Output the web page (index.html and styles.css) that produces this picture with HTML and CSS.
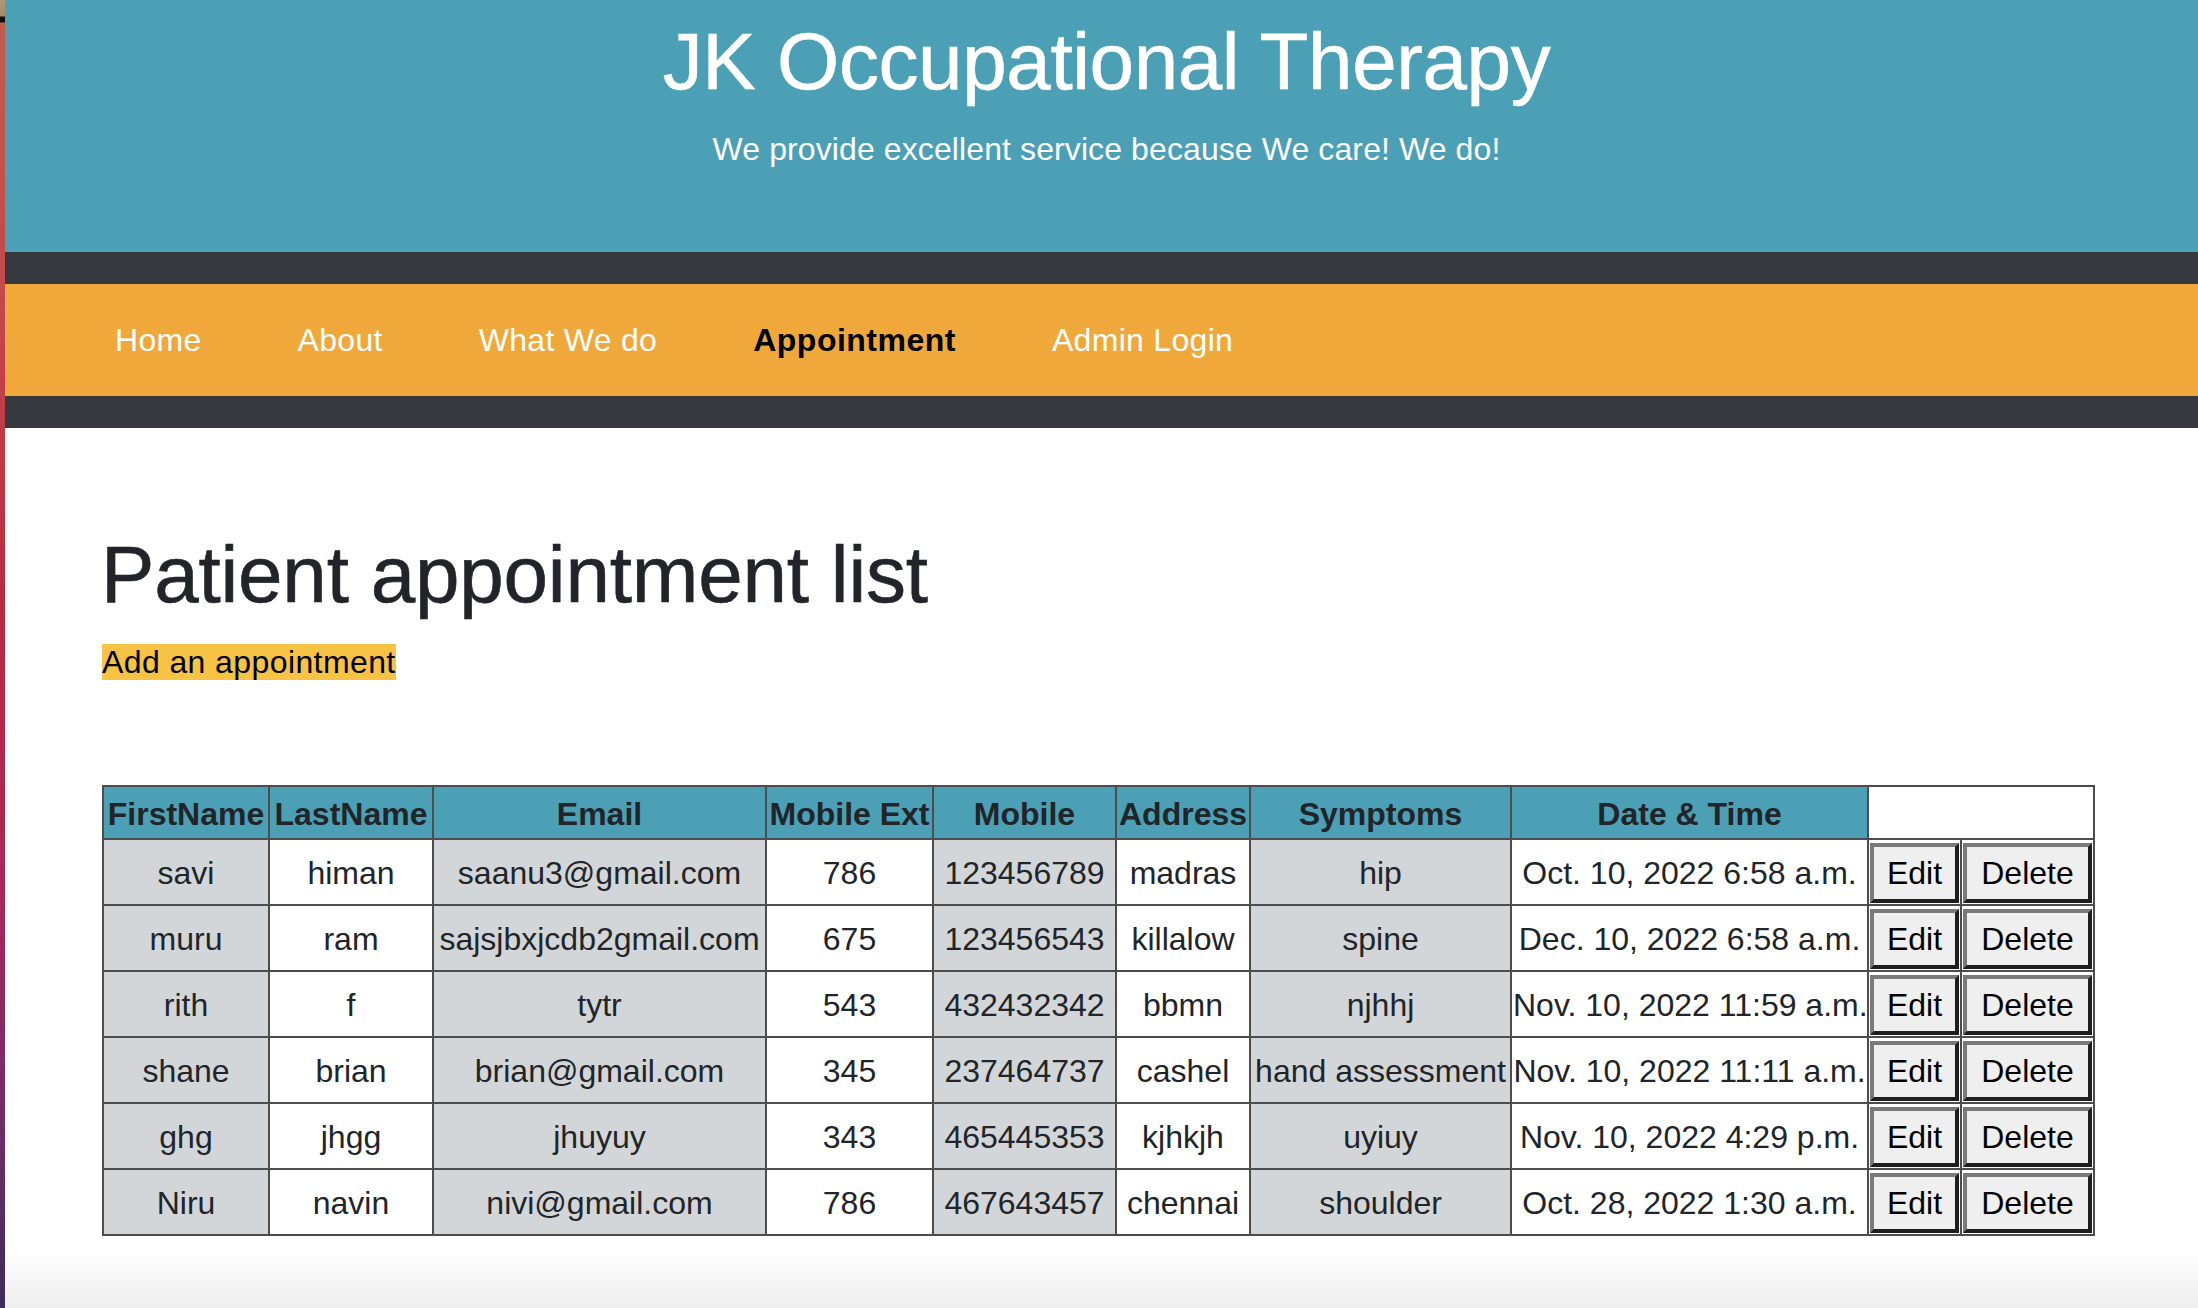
FILE: index.html
```html
<!DOCTYPE html>
<html lang="en">
<head>
<meta charset="utf-8">
<title>JK Occupational Therapy</title>
<link rel="stylesheet" href="styles.css">
</head>
<body>
<div class="strip"></div>
<div class="page">
  <header class="masthead">
    <h1 class="site-title">JK Occupational Therapy</h1>
    <p class="tagline">We provide excellent service because We care! We do!</p>
  </header>
  <div class="darkbar"></div>
  <nav class="nav">
    <a class="nav-link" href="#">Home</a>
    <a class="nav-link" href="#">About</a>
    <a class="nav-link" href="#">What We do</a>
    <a class="nav-link active" href="#">Appointment</a>
    <a class="nav-link" href="#">Admin Login</a>
  </nav>
  <div class="darkbar"></div>
  <main class="content">
    <h1 class="page-title">Patient appointment list</h1>
    <p class="add-line"><a class="add-link" href="#">Add an appointment</a></p>
    <table class="list">
      <colgroup>
        <col class="c1"><col class="c2"><col class="c3"><col class="c4"><col class="c5">
        <col class="c6"><col class="c7"><col class="c8"><col class="c9"><col class="c10">
      </colgroup>
      <thead>
        <tr>
          <th>FirstName</th><th>LastName</th><th>Email</th><th>Mobile Ext</th><th>Mobile</th>
          <th>Address</th><th>Symptoms</th><th>Date &amp; Time</th><th class="blank" colspan="2"></th>
        </tr>
      </thead>
      <tbody>
        <tr><td>savi</td><td>himan</td><td>saanu3@gmail.com</td><td>786</td><td>123456789</td><td>madras</td><td>hip</td><td>Oct. 10, 2022 6:58 a.m.</td><td class="act"><button class="btn">Edit</button></td><td class="act"><button class="btn">Delete</button></td></tr>
        <tr><td>muru</td><td>ram</td><td>sajsjbxjcdb2gmail.com</td><td>675</td><td>123456543</td><td>killalow</td><td>spine</td><td>Dec. 10, 2022 6:58 a.m.</td><td class="act"><button class="btn">Edit</button></td><td class="act"><button class="btn">Delete</button></td></tr>
        <tr><td>rith</td><td>f</td><td>tytr</td><td>543</td><td>432432342</td><td>bbmn</td><td>njhhj</td><td>Nov. 10, 2022 11:59 a.m.</td><td class="act"><button class="btn">Edit</button></td><td class="act"><button class="btn">Delete</button></td></tr>
        <tr><td>shane</td><td>brian</td><td>brian@gmail.com</td><td>345</td><td>237464737</td><td>cashel</td><td>hand assessment</td><td>Nov. 10, 2022 11:11 a.m.</td><td class="act"><button class="btn">Edit</button></td><td class="act"><button class="btn">Delete</button></td></tr>
        <tr><td>ghg</td><td>jhgg</td><td>jhuyuy</td><td>343</td><td>465445353</td><td>kjhkjh</td><td>uyiuy</td><td>Nov. 10, 2022 4:29 p.m.</td><td class="act"><button class="btn">Edit</button></td><td class="act"><button class="btn">Delete</button></td></tr>
        <tr><td>Niru</td><td>navin</td><td>nivi@gmail.com</td><td>786</td><td>467643457</td><td>chennai</td><td>shoulder</td><td>Oct. 28, 2022 1:30 a.m.</td><td class="act"><button class="btn">Edit</button></td><td class="act"><button class="btn">Delete</button></td></tr>
      </tbody>
    </table>
  </main>
</div>
</body>
</html>
```
FILE: styles.css
```css
html, body {
  margin: 0;
  padding: 0;
}
body {
  display: flex;
  min-height: 1308px;
  font-family: "Liberation Sans", Arial, sans-serif;
  color: #212529;
  background: #fff;
}
.strip {
  width: 5px;
  flex: none;
  background: linear-gradient(to bottom,
    #b39574 0px, #a7896a 16px, #111 17px, #111 22px,
    #c55a4e 23px, #c4494a 300px, #bb2a40 600px,
    #a5285a 900px, #6a2c66 1150px, #3b2d5d 1308px);
}
.page {
  flex: 1;
  min-width: 0;
  background: linear-gradient(to bottom, #fff 0, #fff calc(100% - 56px), #eeeeee 100%);
}
.masthead {
  background: #4ba0b5;
  height: 252px;
  box-sizing: border-box;
  padding: 14px 0 0 10px;
  text-align: center;
  color: #fff;
}
.site-title {
  margin: 0;
  font-size: 80px;
  line-height: 96px;
  font-weight: 400;
  letter-spacing: -0.4px;
  -webkit-text-stroke: 0.6px currentColor;
}
.tagline {
  margin: 15px 0 0;
  font-size: 32px;
  line-height: 48px;
  letter-spacing: 0.1px;
}
.darkbar {
  height: 32px;
  background: #363a3f;
}
.nav {
  height: 112px;
  background: #f1a83a;
  display: flex;
  align-items: center;
  padding-left: 62px;
}
.nav-link {
  color: #fff;
  text-decoration: none;
  font-size: 32px;
  line-height: 48px;
  padding: 0 48px;
  letter-spacing: 0.3px;
}
.nav-link.active {
  color: #000;
  font-weight: 700;
  letter-spacing: 0.5px;
}
.content {
  padding: 99px 0 60px 97px;
}
.page-title {
  margin: 0 0 15px -1px;
  font-size: 80px;
  line-height: 96px;
  font-weight: 400;
  letter-spacing: -0.2px;
  -webkit-text-stroke: 0.6px currentColor;
}
.add-line {
  margin: 0 0 99px;
  font-size: 32px;
  line-height: 48px;
}
.add-link {
  color: #000;
  text-decoration: none;
  background: #f6c344;
  letter-spacing: 0.4px;
}
.list {
  border-collapse: collapse;
  table-layout: fixed;
  width: 1991px;
  font-size: 32px;
  border: 2px solid #4d4d4d;
}
.c1 { width: 166px; }
.c2 { width: 164px; }
.c3 { width: 333px; }
.c4 { width: 167px; }
.c5 { width: 183px; }
.c6 { width: 134px; }
.c7 { width: 261px; }
.c8 { width: 357px; }
.c9 { width: 93px; }
.c10 { width: 133px; }
.list th,
.list td {
  border: 2px solid #4d4d4d;
  padding: 0 1px;
  text-align: center;
  white-space: nowrap;
  overflow: visible;
}
.list th {
  height: 48px;
  padding-top: 3px;
  background: #4ba0b5;
  font-weight: 700;
  color: #212529;
}
.list th.blank {
  background: #fff;
}
.list td {
  height: 59px;
  padding-top: 3px;
  background: #fff;
}
.list td:nth-child(odd) {
  background: #d3d6d8;
}
.list td.act {
  background: #fff;
  height: 62px;
  padding: 2px 1px 0;
}
.btn {
  display: block;
  width: 100%;
  height: 60px;
  margin: 0;
  padding: 0;
  font-family: "Liberation Sans", Arial, sans-serif;
  font-size: 32px;
  color: #000;
  background: #efefef;
  border: 4px solid;
  border-color: #7a7a7a #1e1e1e #1e1e1e #7a7a7a;
}
```
